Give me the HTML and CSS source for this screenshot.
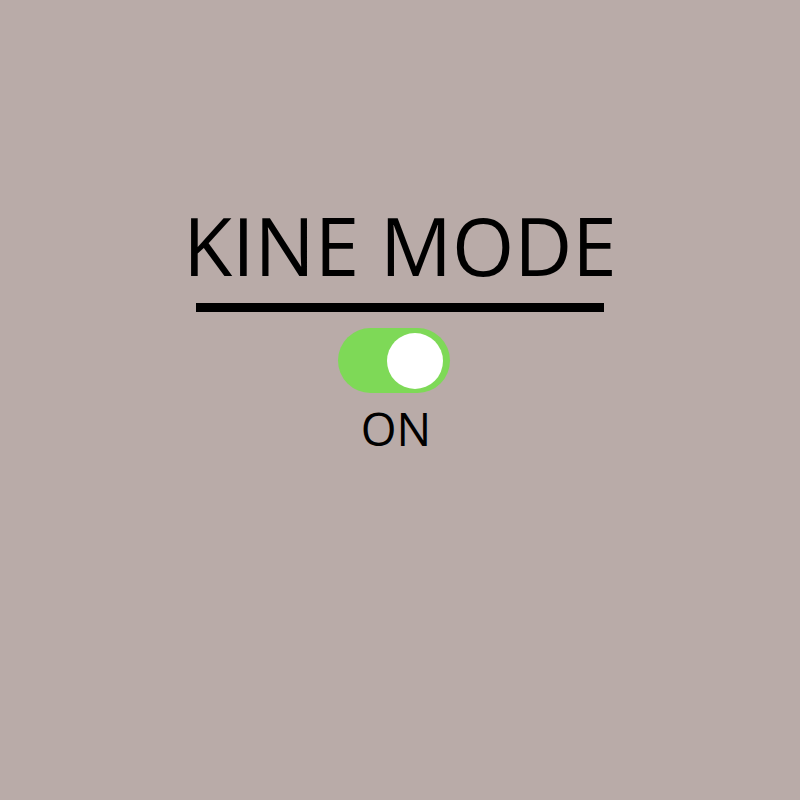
FILE: index.html
```html
<!DOCTYPE html>
<html lang="en">
<head>
    <meta charset="UTF-8">
    <meta name="viewport" content="width=device-width, initial-scale=1.0">
    <title>Kine Mode</title>
    <link rel="stylesheet" href="styles.css">
</head>
<body>
    <main class="container">
        <h1 class="title">KINE MODE</h1>
        <div class="panel">
            <hr class="line">
            <label class="mode">
                <input class="switch" type="checkbox" role="switch" checked>
                <span class="state">ON</span>
            </label>
        </div>
    </main>
</body>
</html>
```

FILE: styles.css
```css
body {
    font-family: "Open Sans", "Noto Sans", sans-serif;
    margin: 0;
    background-color: #b9aba8;
    color: #000;
}
.container {
    display: flex;
    flex-direction: column;
    align-items: center;
    padding-top: 197px;
}
.title {
    margin: 0;
    font-size: 80px;
    font-weight: 400;
    line-height: 96px;
}
.panel {
    display: flex;
    flex-direction: column;
    align-items: center;
    width: 408px;
    max-width: 100%;
    padding-top: 10px;
}
.line {
    width: 100%;
    height: 9px;
    margin: 0;
    border: none;
    background-color: #000;
}
.mode {
    display: flex;
    flex-direction: column;
    align-items: center;
    margin-top: 16px;
    margin-right: 12px;
    cursor: pointer;
}
.switch {
    appearance: none;
    display: flex;
    align-items: center;
    box-sizing: border-box;
    width: 112px;
    height: 65px;
    margin: 0;
    padding: 0 7px;
    border-radius: 33px;
    background-color: #8c8280;
    cursor: pointer;
}
.switch::before {
    content: "";
    width: 56px;
    height: 56px;
    border-radius: 50%;
    background-color: #fff;
}
.switch:checked {
    justify-content: flex-end;
    background-color: #7ed957;
}
.state {
    padding-left: 4px;
    font-size: 46px;
    line-height: 70px;
}
```
